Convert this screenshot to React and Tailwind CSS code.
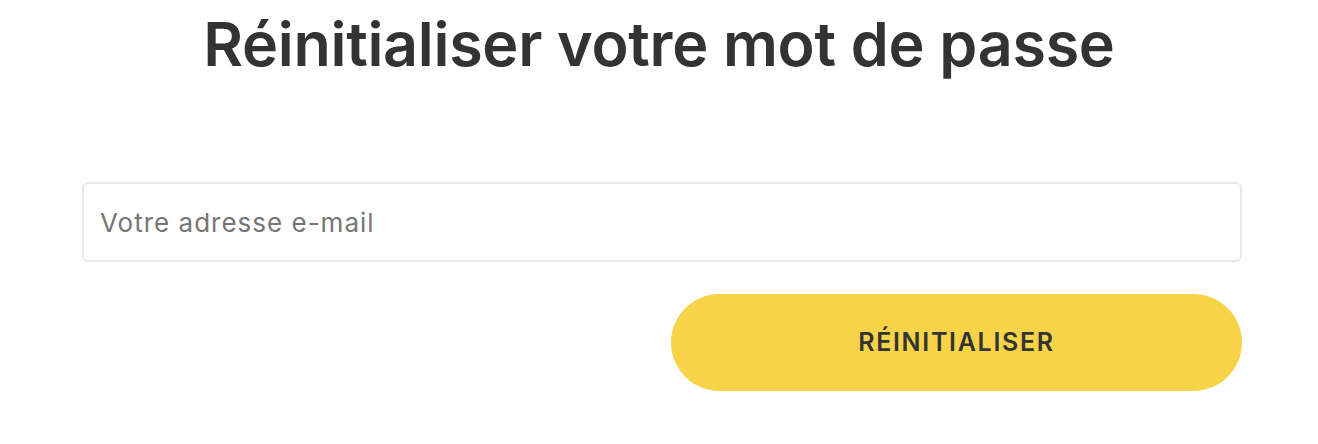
import React, { useState } from 'react'

export default function App() {
  const [email, setEmail] = useState('')

  return (
    <div className="w-[1318px] h-[444px] bg-white font-['Inter','Noto_Sans',sans-serif] text-[#333333]">
      <h1 className="pt-[8px] text-center text-[61px] leading-[72px] font-semibold tracking-[-0.3px]">
        Réinitialiser votre mot de passe
      </h1>
      <form
        onSubmit={(e) => e.preventDefault()}
        className="ml-[82px] mt-[102px] w-[1160px] flex flex-col items-end"
      >
        <input
          type="email"
          value={email}
          onChange={(e) => setEmail(e.target.value)}
          placeholder="Votre adresse e-mail"
          className="w-full h-[80px] pl-[16px] pr-[17px] border-2 border-[#e8e8eb] rounded-[6px] text-[26px] tracking-[1px] text-[#333333] placeholder:text-[#757575] outline-none"
        />
        <button
          type="submit"
          className="mt-[32px] w-[571px] h-[97px] rounded-full bg-[#f7d348] text-[25px] font-semibold tracking-[1.7px] text-[#333333]"
        >
          RÉINITIALISER
        </button>
      </form>
    </div>
  )
}
